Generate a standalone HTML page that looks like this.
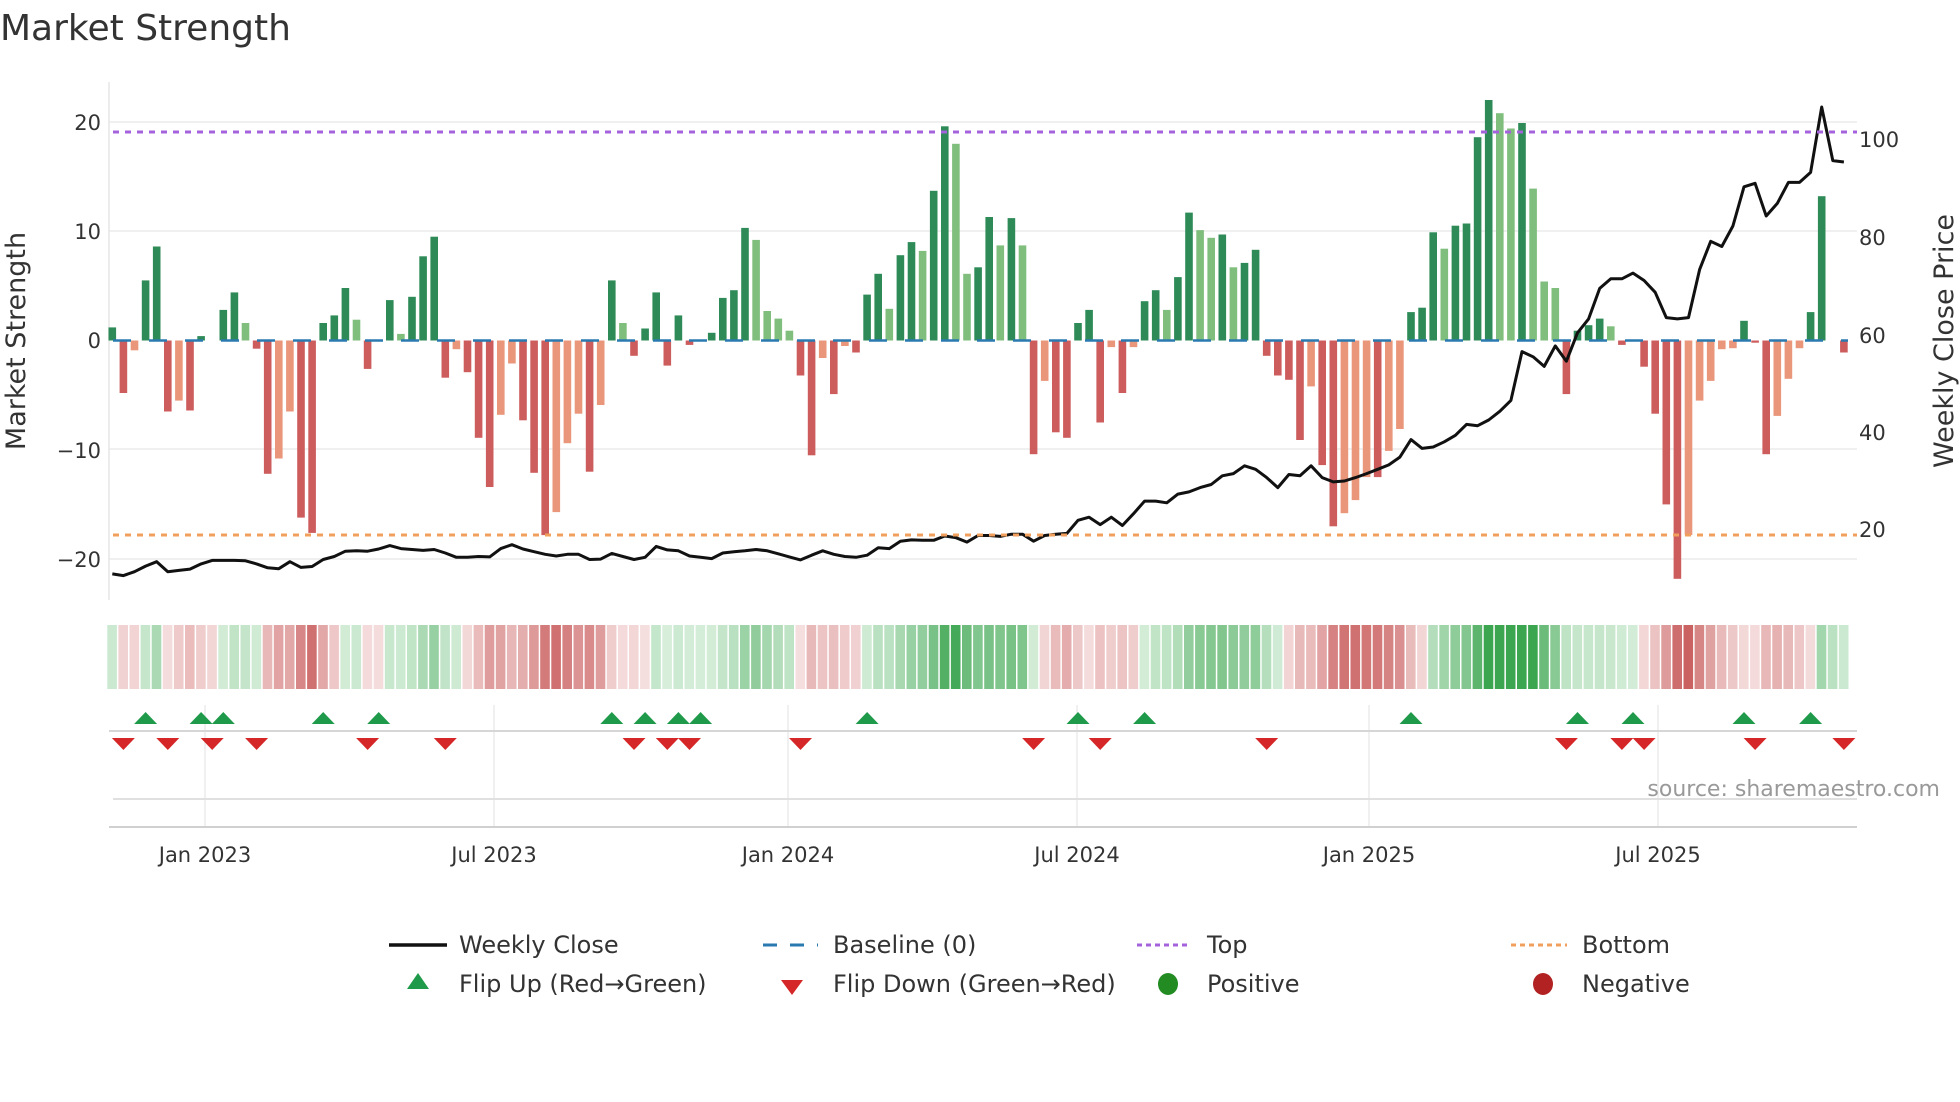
<!DOCTYPE html>
<html><head><meta charset="utf-8"><style>
html,body{margin:0;padding:0;background:#fff;width:1960px;height:1102px;overflow:hidden}
svg{display:block}
text{font-family:"DejaVu Sans","Liberation Sans",sans-serif;fill:#333}
</style></head><body>
<svg id="s" width="1960" height="1102" viewBox="0 0 1960 1102" xmlns="http://www.w3.org/2000/svg">
<text x="0" y="40" font-size="36">Market Strength</text>
<g stroke="#ececec" stroke-width="1.5">
<line x1="109" y1="122" x2="1857" y2="122"/><line x1="109" y1="231" x2="1857" y2="231"/>
<line x1="109" y1="449" x2="1857" y2="449"/><line x1="109" y1="559" x2="1857" y2="559"/>
</g>
<line x1="109" y1="82" x2="109" y2="600" stroke="#e6e6e6" stroke-width="1.5"/>
<g font-size="21" text-anchor="end">
<text x="101" y="130">20</text><text x="101" y="239">10</text><text x="101" y="348">0</text>
<text x="101" y="458">−10</text><text x="101" y="567">−20</text>
</g>
<g font-size="21">
<text x="1859" y="147">100</text><text x="1859" y="245">80</text><text x="1859" y="343">60</text>
<text x="1859" y="440">40</text><text x="1859" y="537">20</text>
</g>
<text transform="translate(25,341) rotate(-90)" font-size="27" text-anchor="middle">Market Strength</text>
<text transform="translate(1953,341) rotate(-90)" font-size="27" text-anchor="middle">Weekly Close Price</text>
<g id="bars"></g>
<line x1="113" y1="132" x2="1857" y2="132" stroke="#a463dc" stroke-width="3" stroke-dasharray="6 6"/>
<line x1="113" y1="535" x2="1857" y2="535" stroke="#f0a05c" stroke-width="3" stroke-dasharray="6 6"/>
<g id="heat"></g>
<g stroke="#eaeaea" stroke-width="1.5">
<line x1="205" y1="705" x2="205" y2="827"/><line x1="494" y1="705" x2="494" y2="827"/>
<line x1="788" y1="705" x2="788" y2="827"/><line x1="1077" y1="705" x2="1077" y2="827"/>
<line x1="1369" y1="705" x2="1369" y2="827"/><line x1="1658" y1="705" x2="1658" y2="827"/>
</g>
<line x1="109" y1="731" x2="1857" y2="731" stroke="#d6d6d6" stroke-width="2"/>
<line x1="113" y1="799" x2="1857" y2="799" stroke="#e0e0e0" stroke-width="2"/>
<line x1="109" y1="827" x2="1857" y2="827" stroke="#d0d0d0" stroke-width="2"/>
<g id="mk"></g>
<text x="1940" y="796" font-size="22" text-anchor="end" style="fill:#999">source: sharemaestro.com</text>
<g font-size="21" text-anchor="middle">
<text x="205" y="862">Jan 2023</text><text x="494" y="862">Jul 2023</text><text x="788" y="862">Jan 2024</text>
<text x="1077" y="862">Jul 2024</text><text x="1369" y="862">Jan 2025</text><text x="1658" y="862">Jul 2025</text>
</g>
<g font-size="24">
<line x1="389" y1="945" x2="447" y2="945" stroke="#111" stroke-width="3.5"/>
<text x="459" y="953">Weekly Close</text>
<line x1="763" y1="945" x2="818" y2="945" stroke="#2a7ab0" stroke-width="3" stroke-dasharray="14 13"/>
<text x="833" y="953">Baseline (0)</text>
<line x1="1137" y1="945" x2="1191" y2="945" stroke="#a463dc" stroke-width="3" stroke-dasharray="5 4"/>
<text x="1207" y="953">Top</text>
<line x1="1511" y1="945" x2="1567" y2="945" stroke="#f0a05c" stroke-width="3" stroke-dasharray="5 4"/>
<text x="1582" y="953">Bottom</text>
<polygon points="418,973 407,989 429,989" fill="#1f9a4a"/>
<text x="459" y="992">Flip Up (Red→Green)</text>
<polygon points="781,980 803,980 792,995" fill="#d62728"/>
<text x="833" y="992">Flip Down (Green→Red)</text>
<ellipse cx="1168" cy="984" rx="10" ry="11" fill="#228b22"/>
<text x="1207" y="992">Positive</text>
<ellipse cx="1543" cy="984" rx="10" ry="11" fill="#b22222"/>
<text x="1582" y="992">Negative</text>
</g>
</svg>
<script>
var D="1.2g -4.8r -0.9s 5.5g 8.6g -6.5r -5.5s -6.4r 0.4g 0z 2.8g 4.4g 1.6l -0.75r -12.2r -10.8s -6.5s -16.2r -17.6r 1.6g 2.3g 4.8g 1.9l -2.6r 0z 3.7g 0.6l 4.0g 7.7g 9.5g -3.4r -0.8s -2.9r -8.9r -13.4r -6.8s -2.1s -7.3r -12.1r -17.8r -15.7s -9.4s -6.7s -12r -5.9s 5.5g 1.6l -1.4r 1.1g 4.4g -2.3r 2.3g -0.4r 0z 0.7g 3.9g 4.6g 10.3g 9.2l 2.7l 2.0l 0.9l -3.2r -10.5r -1.6s -4.9r -0.5s -1.1r 4.2g 6.1g 2.9l 7.8g 9.0g 8.2l 13.7g 19.6g 18l 6.1l 6.7g 11.3g 8.7l 11.2g 8.7l -10.4r -3.7s -8.4r -8.9r 1.6g 2.8g -7.5r -0.6s -4.8r -0.6s 3.6g 4.6g 2.8l 5.8g 11.7g 10.1l 9.4l 9.7g 6.7l 7.1g 8.3g -1.4r -3.2r -3.6r -9.1r -4.2s -11.4r -17r -15.8s -14.6s -12.5s -12.5r -10.1s -8.1s 2.6g 3.0g 9.9g 8.4l 10.5g 10.7g 18.6g 22g 20.8l 19.4l 19.9g 13.9l 5.4l 4.8l -4.9r 0.9g 1.4g 2.0g 1.3l -0.4r 0z -2.4r -6.7r -15r -21.8r -17.8s -5.5s -3.7s -0.8s -0.7s 1.8g -0.2r -10.4r -6.9s -3.5s -0.7s 2.6g 13.2g 0z -1.1r".split(" ");
var P=[1133,1137,1128,1115,1105,1128,1125,1122,1110,1102,1102,1102,1103,1110,1119,1121,1105,1118,1116,1100,1093,1081,1080,1081,1076,1068,1075,1077,1079,1077,1085,1095,1095,1093,1094,1075,1066,1076,1082,1088,
1092,1088,1088,1100,1099,1086,1093,1100,1095,1070,1078,1080,1092,1095,1098,1085,1082,1080,1077,1080,1087,1094,1101,1090,1080,1088,1093,1095,1090,1073,1075,1058,1055,1056,1056,1046,1050,1060,1045,1045,
1047,1042,1042,1058,1045,1042,1040,1010,1003,1020,1003,1022,995,966,966,970,950,945,935,928,908,903,885,893,912,935,905,908,885,912,922,920,912,903,893,883,865,825,845,842,
830,815,790,793,780,760,735,623,635,657,610,645,580,548,478,456,456,443,460,487,545,548,545,435,370,382,335,245,237,312,283,235,235,212,62,185,188];
var C={g:"#2e8b57",l:"#80be7e",r:"#cd5c5c",s:"#e9967a"};
var step=11.1,x0=112.3,Z=340.5,U=10.93,h="";
function X(i){return x0+i*step}
for(var i=0;i<D.length;i++){var v=parseFloat(D[i]),t=D[i].slice(-1);if(t=="z")continue;
var y=v>0?Z-v*U:Z,hh=Math.abs(v)*U;h+='<rect x="'+(X(i)-3.8).toFixed(1)+'" y="'+y.toFixed(1)+'" width="7.6" height="'+hh.toFixed(1)+'" fill="'+C[t]+'"/>';}
h+='<line x1="113" y1="340.5" x2="1848" y2="340.5" stroke="#2a7ab0" stroke-width="2.5" stroke-dasharray="18 18"/>';
var pts=[];for(var i=0;i<P.length;i++)pts.push(X(i).toFixed(1)+","+(80+P[i]/2.294).toFixed(1));
h+='<polyline points="'+pts.join(" ")+'" fill="none" stroke="#111" stroke-width="3" stroke-linejoin="round"/>';
document.getElementById("bars").innerHTML=h;
function mix(a,b,t){var r="#";for(var k=0;k<3;k++){var c=Math.round(a[k]+(b[k]-a[k])*t);r+=("0"+c.toString(16)).slice(-2)}return r}
var e=0,hm="";for(var i=0;i<D.length;i++){var v=parseFloat(D[i]);e=i==0?v:e*0.55+v*0.45;
var tt=Math.min(1,Math.abs(e)/17);var col=e>=0?mix([214,238,218],[60,165,80],tt):mix([245,222,222],[200,90,90],tt);
hm+='<rect x="'+(X(i)-5).toFixed(1)+'" y="625" width="9.6" height="64" fill="'+col+'"/>';}
document.getElementById("heat").innerHTML=hm;
var up=[3,8,10,19,24,45,48,51,53,68,87,93,117,132,137,147,153],dn=[1,5,9,13,23,30,47,50,52,62,83,89,104,131,136,138,148,156],m="";
up.forEach(function(i){var x=X(i);m+='<polygon points="'+(x-11.5)+',724 '+(x+11.5)+',724 '+x+',712" fill="#1f9a4a"/>'});
dn.forEach(function(i){var x=X(i);m+='<polygon points="'+(x-11.5)+',738 '+(x+11.5)+',738 '+x+',750" fill="#d62728"/>'});
document.getElementById("mk").innerHTML=m;
</script>
</body></html>
